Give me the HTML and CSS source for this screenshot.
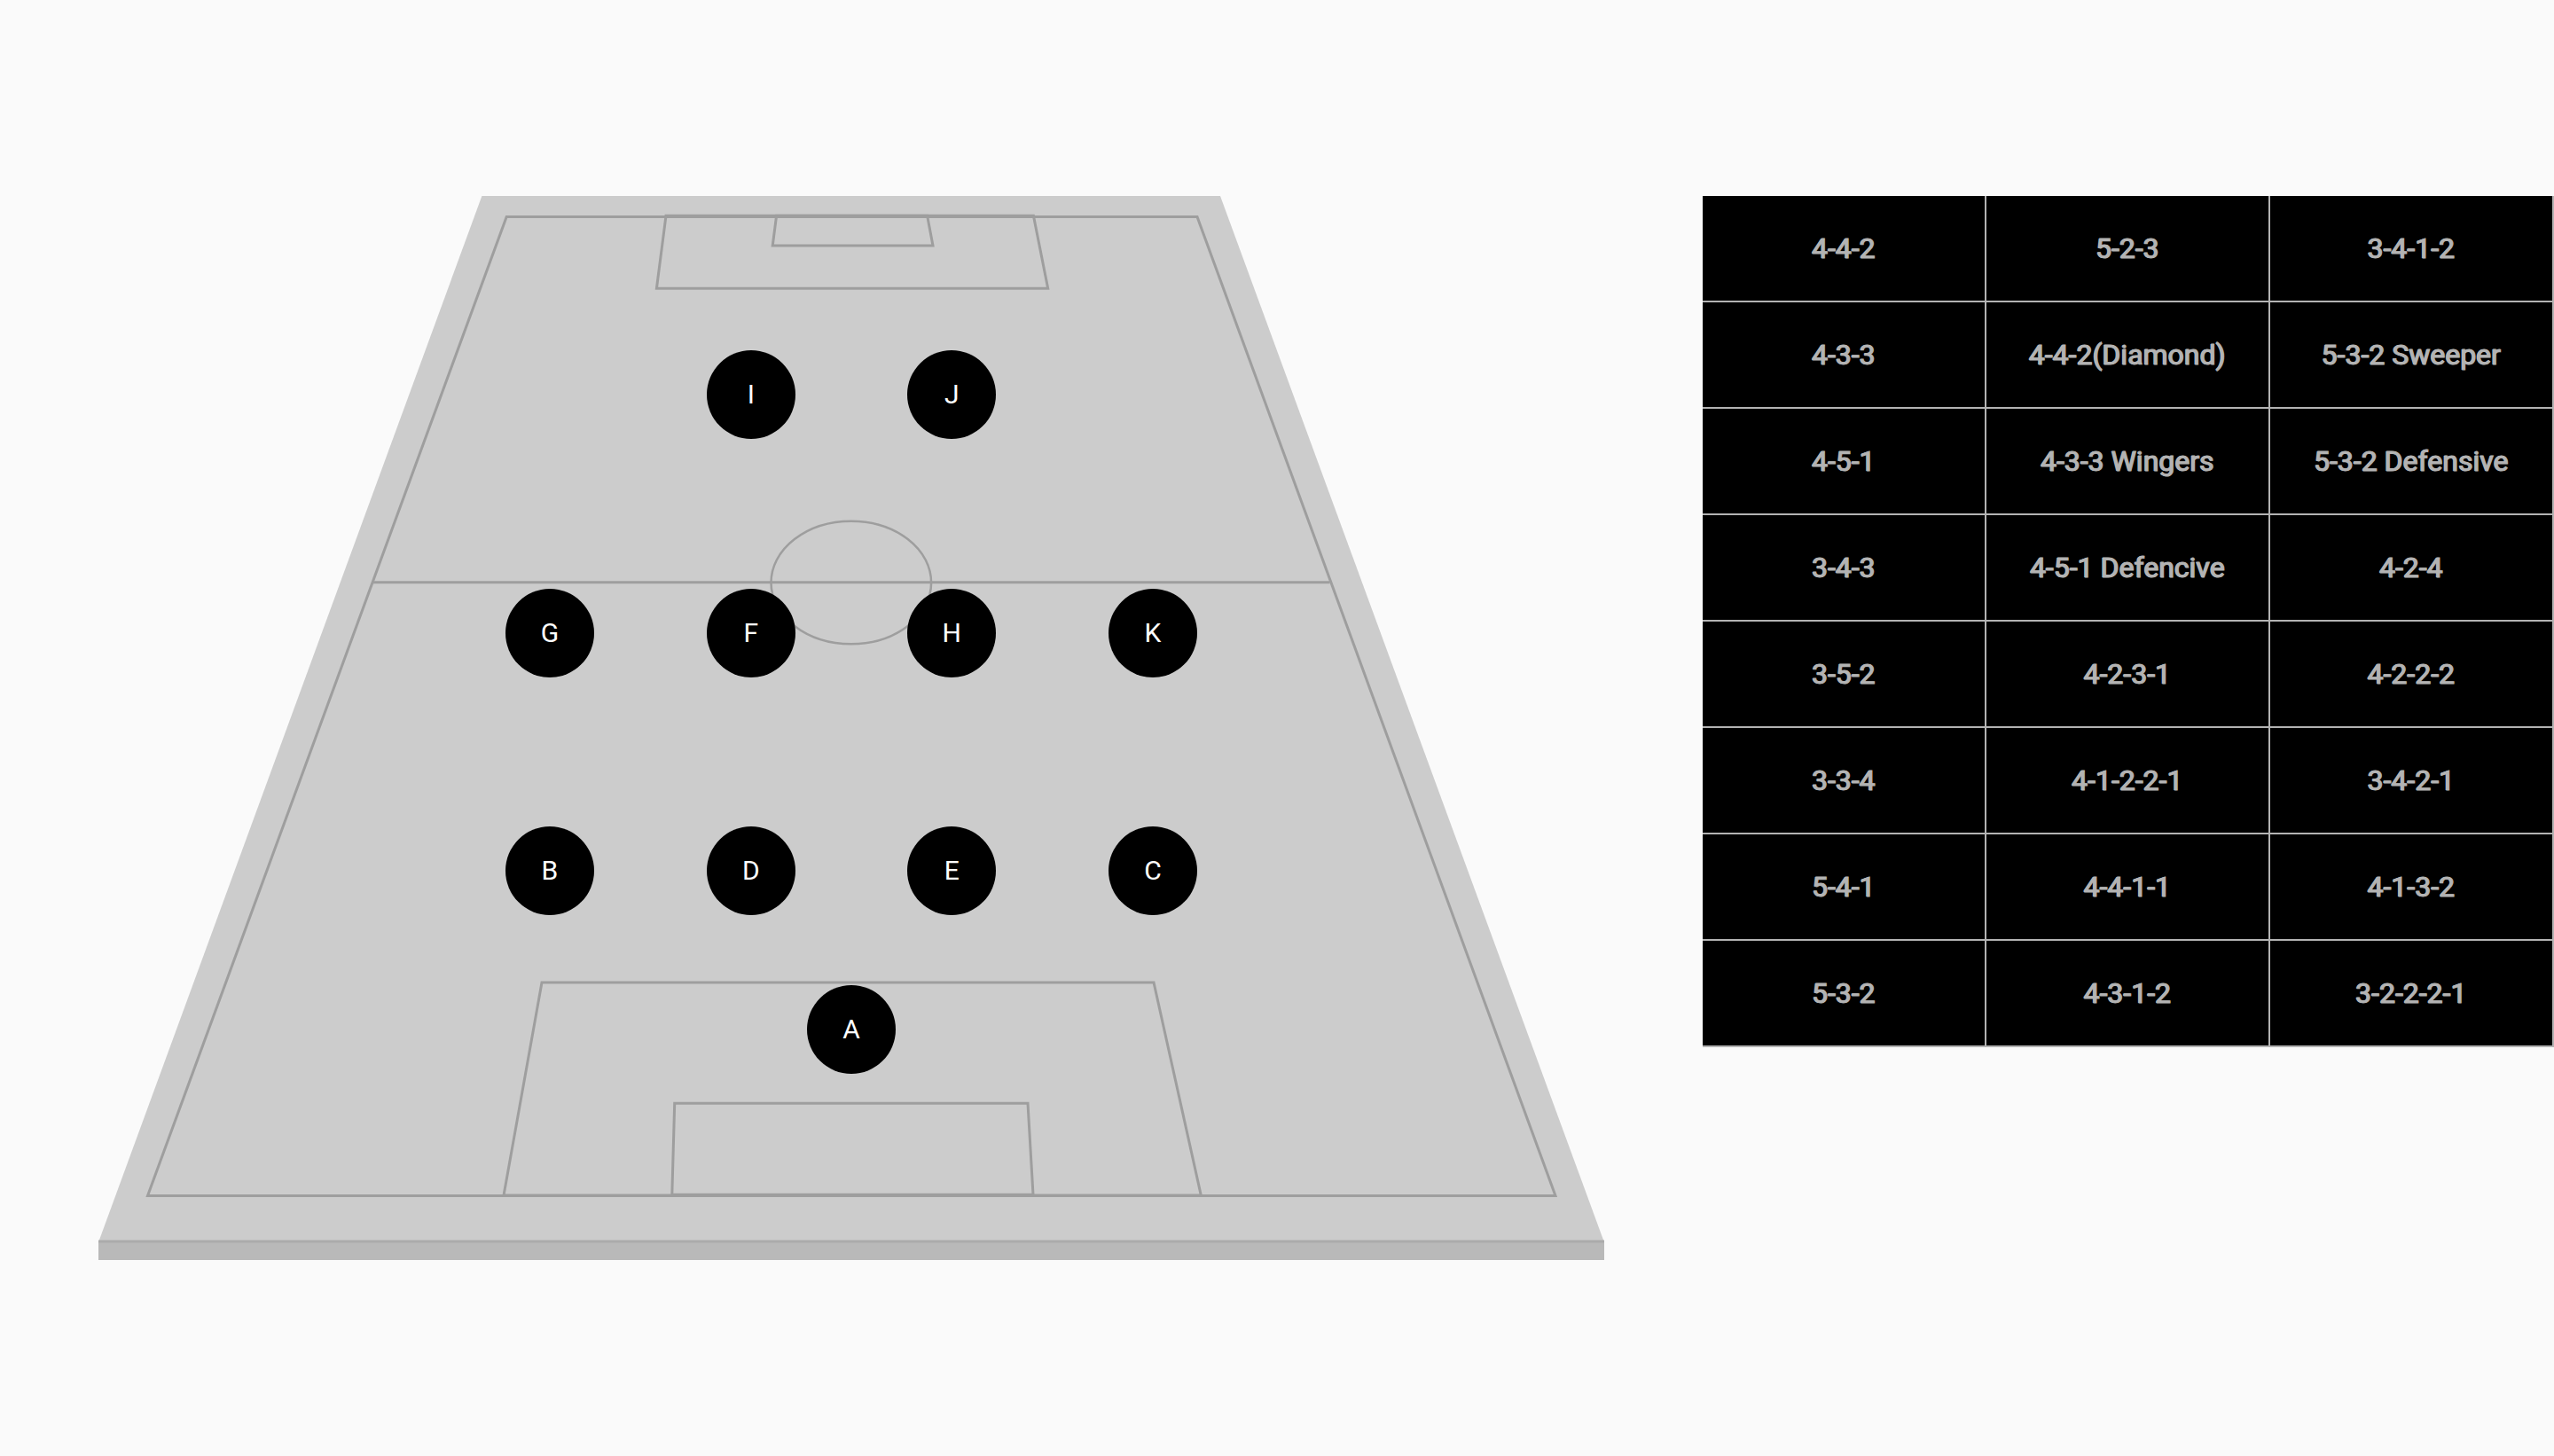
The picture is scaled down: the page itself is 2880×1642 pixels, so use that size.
FILE: index.html
```html
<!DOCTYPE html>
<html lang="en">
<head>
<meta charset="utf-8">
<meta name="viewport" content="width=device-width, initial-scale=1">
<title>Formations</title>
<link rel="stylesheet" href="styles.css">
</head>
<body>
<main class="board">
  <section class="pitch" aria-label="Pitch">
    <svg class="field" viewBox="0 0 1920 1200" aria-hidden="true">
      <polygon class="turf" points="543.4,0 1376,0 1809,1180 111,1180"/>
      <rect class="edge" x="111" y="1178" width="1698" height="22"/>
      <path class="edge-line" d="M111 1179H1809"/>
      <g class="lines">
        <polygon points="571.2,23.5 1350,23.5 1754,1127.5 166.5,1127.5"/>
        <polygon points="751,22.3 1165.4,22.3 1181.7,104.3 740.4,104.3"/>
        <polygon points="875.6,22.3 1045.6,22.3 1052,56 871.2,56"/>
        <path d="M420.5 435.7H1499.5"/>
        <ellipse class="circle" cx="959.8" cy="436" rx="90.3" ry="69.3"/>
        <polygon points="611,887 1301,887 1354.3,1127 568,1127"/>
        <polygon points="760.7,1023.2 1159,1023.2 1165,1126.3 757.8,1126.3"/>
      </g>
    </svg>
    <span class="player row-attack col-2">I</span>
    <span class="player row-attack col-4">J</span>
    <span class="player row-middle col-1">G</span>
    <span class="player row-middle col-2">F</span>
    <span class="player row-middle col-4">H</span>
    <span class="player row-middle col-5">K</span>
    <span class="player row-defence col-1">B</span>
    <span class="player row-defence col-2">D</span>
    <span class="player row-defence col-4">E</span>
    <span class="player row-defence col-5">C</span>
    <span class="player row-keeper col-3">A</span>
  </section>
  <section class="formations" aria-label="Formations">
    <button type="button">4-4-2</button>
    <button type="button">5-2-3</button>
    <button type="button">3-4-1-2</button>
    <button type="button">4-3-3</button>
    <button type="button">4-4-2(Diamond)</button>
    <button type="button">5-3-2 Sweeper</button>
    <button type="button">4-5-1</button>
    <button type="button">4-3-3 Wingers</button>
    <button type="button">5-3-2 Defensive</button>
    <button type="button">3-4-3</button>
    <button type="button">4-5-1 Defencive</button>
    <button type="button">4-2-4</button>
    <button type="button">3-5-2</button>
    <button type="button">4-2-3-1</button>
    <button type="button">4-2-2-2</button>
    <button type="button">3-3-4</button>
    <button type="button">4-1-2-2-1</button>
    <button type="button">3-4-2-1</button>
    <button type="button">5-4-1</button>
    <button type="button">4-4-1-1</button>
    <button type="button">4-1-3-2</button>
    <button type="button">5-3-2</button>
    <button type="button">4-3-1-2</button>
    <button type="button">3-2-2-2-1</button>
  </section>
</main>
</body>
</html>
```
FILE: styles.css
```css
* {
  box-sizing: border-box;
}

body {
  margin: 0;
  background: #fafafa;
  font-family: Roboto, "Liberation Sans", sans-serif;
}

.board {
  display: grid;
  grid-template-columns: 2fr 1fr;
  align-content: center;
  align-items: start;
  min-height: 100vh;
}

.pitch {
  position: relative;
}

.field {
  display: block;
  width: 100%;
}

.turf {
  fill: #ccc;
}

.edge {
  fill: #b9b9b9;
}

.edge-line {
  stroke: #ababab;
  stroke-width: 3;
}

.lines {
  fill: none;
  stroke: #9e9e9e;
  stroke-width: 3;
}

.circle {
  stroke-width: 2.5;
}

/* Players are pinned to the pitch by their centre. */
.player {
  position: absolute;
  display: flex;
  align-items: center;
  justify-content: center;
  width: 100px;
  height: 100px;
  margin: -50px 0 0 -50px;
  border-radius: 50%;
  background: #000;
  color: #fff;
  font-size: 30px;
  line-height: 36px;
}

.row-attack { top: 18.67%; }
.row-middle { top: 41.06%; }
.row-defence { top: 63.39%; }
.row-keeper { top: 78.33%; }

.col-1 { left: 32.29%; }
.col-2 { left: 44.1%; }
.col-3 { left: 50%; }
.col-4 { left: 55.9%; }
.col-5 { left: 67.71%; }

.formations {
  display: grid;
  grid-template-columns: repeat(3, 1fr);
  grid-auto-rows: 120px;
}

/* Regular weight thickened by an outline and a one-pixel shadow. */
.formations button {
  margin: 0;
  padding: 0;
  border: solid #b3b3b3;
  border-width: 0 2px 2px 0;
  background: #000;
  color: #b3b3b3;
  font: 400 32px/38px Roboto, "Liberation Sans", sans-serif;
  -webkit-text-stroke: 1px #b3b3b3;
  text-shadow: -1px 0 #b3b3b3;
  cursor: pointer;
}
```
